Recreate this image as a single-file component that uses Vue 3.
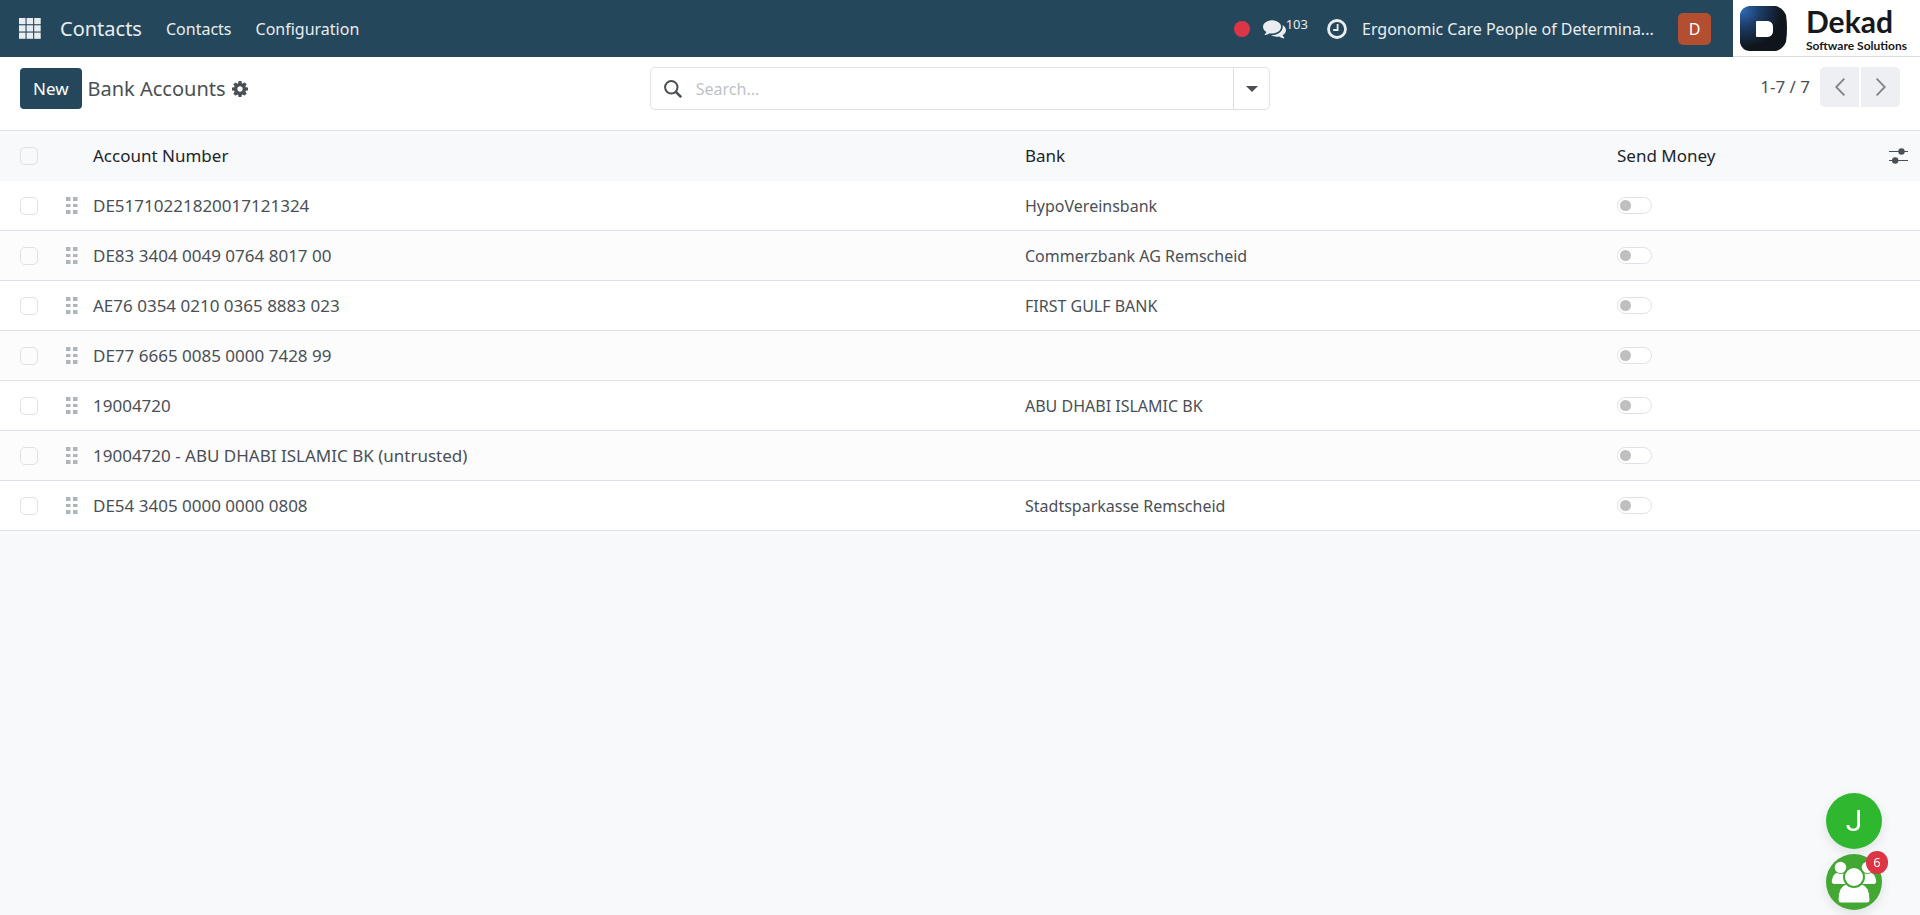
<template>
  <div class="web-client">
    <header class="navbar">
      <nav class="nav-menu" aria-label="Main">
        <button class="nav-apps" type="button" aria-label="Home menu">
          <svg viewBox="0 0 22 21" width="22" height="21" fill="currentColor">
            <template v-for="row in 3" :key="row">
              <rect
                v-for="col in 3"
                :key="col"
                :x="(col - 1) * 7.6"
                :y="(row - 1) * 7.3"
                width="6.5"
                height="6.2"
              />
            </template>
          </svg>
        </button>
        <a href="#" class="nav-brand">Contacts</a>
        <a v-for="item in menuItems" :key="item" href="#" class="nav-link">{{ item }}</a>
      </nav>

      <div class="nav-systray">
        <span class="status-dot"></span>
        <button class="systray-messages" type="button" aria-label="Messages">
          <svg viewBox="0 0 1792 1792" width="23" height="23" fill="currentColor">
            <path d="M1408 768q0 139-94 257t-256.5 186.5-353.5 68.5q-86 0-176-16-124 88-278 128-36 9-86 16h-3q-11 0-20.5-8t-11.5-21q-1-3-1-6.5t.5-6.5 2-6l2.5-5 3.5-5.5 4-5 4.5-5 4-4.5q5-6 23-25t26-29.5 22.5-29 25-38.5 20.5-44q-124-72-195-177t-71-224q0-139 94-257t256.5-186.5 353.5-68.5 353.5 68.5 256.5 186.5 94 257zm384 256q0 120-71 224.5t-195 176.5q10 24 20.5 44t25 38.5 22.5 29 26 29.5 23 25q1 1 4 4.5t4.5 5 4 5 3.5 5.5l2.5 5 2 6 .5 6.5-1 6.5q-3 14-13 22t-22 7q-50-7-86-16-154-40-278-128-90 16-176 16-271 0-472-132 58 4 88 4 161 0 309-45t264-129q125-92 192-212t67-254q0-77-23-152 129 71 204 178t75 230z" />
          </svg>
          <span class="message-count">103</span>
        </button>
        <button class="systray-activities" type="button" aria-label="Activities">
          <svg viewBox="0 0 20 20" width="20" height="20" fill="none" stroke="currentColor">
            <circle cx="10" cy="10" r="8.5" stroke-width="2.8" />
            <path d="M10.6 5v6H6.2" stroke-width="1.8" />
          </svg>
        </button>
        <button class="systray-company" type="button">Ergonomic Care People of Determina...</button>
        <button class="systray-avatar" type="button" aria-label="User">D</button>
      </div>

      <a href="#" class="vendor-logo">
        <svg viewBox="0 0 48 45" width="48" height="45">
          <defs>
            <radialGradient id="vendorShade" cx="0.05" cy="0.08" r="0.85">
              <stop offset="0" stop-color="#2f6bb5" />
              <stop offset="0.45" stop-color="#1c3c66" />
              <stop offset="1" stop-color="#10151c" />
            </radialGradient>
          </defs>
          <path d="M9 0h27q7 2 10 9 2 13 0 27-3 7-10 9H9q-7-1-9-8V8q2-7 9-8z" fill="url(#vendorShade)" />
          <path d="M17 15h11q5 1 5 6v4q0 5-5 6H17q-1 0-1-1V16q0-1 1-1z" fill="#fff" />
        </svg>
        <span class="vendor-text">
          <span class="vendor-name">Dekad</span>
          <span class="vendor-tagline">Software Solutions</span>
        </span>
      </a>
    </header>

    <section class="control-panel">
      <div class="panel-left">
        <button class="btn-new" type="button">New</button>
        <h1 class="panel-title">Bank Accounts</h1>
        <button class="btn-gear" type="button" aria-label="Actions">
          <svg viewBox="0 -128 1536 1536" width="16" height="16" fill="currentColor" fill-rule="evenodd">
            <path d="M1024 640q0-106-75-181t-181-75-181 75-75 181 75 181 181 75 181-75 75-181zm512-109v222q0 12-8 23t-20 13l-185 28q-19 54-39 91 35 50 107 138 10 12 10 25t-9 23q-27 37-99 108t-94 71q-12 0-26-9l-138-108q-44 23-91 38-16 136-29 186-7 28-36 28h-222q-14 0-24.5-8.5t-11.5-21.5l-28-184q-49-16-90-37l-141 107q-10 9-25 9-14 0-25-11-126-114-165-168-7-10-7-23 0-12 8-23 15-21 51-66.5t54-70.5q-27-50-41-99l-183-27q-13-2-21-12.5t-8-23.5v-222q0-12 8-23t19-13l186-28q14-46 39-92-40-57-107-138-10-12-10-24 0-10 9-23 26-36 98.5-107.5t94.5-71.5q13 0 26 10l138 107q44-23 91-38 16-136 29-186 7-28 36-28h222q14 0 24.5 8.5t11.5 21.5l28 184q49 16 90 37l142-107q9-9 24-9 13 0 25 10 129 119 165 170 7 8 7 22 0 12-8 23-15 21-51 66.5t-54 70.5q26 50 41 98l183 28q13 2 21 12.5t8 23.5z" />
          </svg>
        </button>
      </div>

      <div class="search-box">
        <svg class="search-icon" viewBox="0 0 18 18" width="18" height="18" fill="none" stroke="currentColor">
          <circle cx="7.3" cy="7.3" r="6.2" stroke-width="2" />
          <path d="M11.6 11.6l5.6 5.6" stroke-width="2.6" />
        </svg>
        <input v-model="query" type="search" placeholder="Search..." aria-label="Search" />
        <button class="search-toggle" type="button" aria-label="Toggle search panel">
          <svg viewBox="0 0 12 6" width="12" height="6" fill="currentColor">
            <path d="M0 0h12L6 6z" />
          </svg>
        </button>
      </div>

      <div class="pager">
        <span class="pager-value">1-7 / 7</span>
        <button class="pager-btn previous" type="button" aria-label="Previous">
          <svg viewBox="0 0 10 18" width="10" height="18" fill="none" stroke="currentColor" stroke-width="1.8">
            <path d="M9.4 0.6L1.2 9l8.2 8.4" />
          </svg>
        </button>
        <button class="pager-btn next" type="button" aria-label="Next">
          <svg viewBox="0 0 10 18" width="10" height="18" fill="none" stroke="currentColor" stroke-width="1.8">
            <path d="M0.6 0.6L8.8 9l-8.2 8.4" />
          </svg>
        </button>
      </div>
    </section>

    <table class="list-table">
      <colgroup>
        <col class="col-select" />
        <col class="col-handle" />
        <col />
        <col class="col-bank" />
        <col class="col-send" />
        <col class="col-options" />
      </colgroup>
      <thead>
        <tr>
          <th class="cell-select">
            <input v-model="allSelected" type="checkbox" class="row-check" aria-label="Select all" />
          </th>
          <th></th>
          <th>Account Number</th>
          <th>Bank</th>
          <th>Send Money</th>
          <th>
            <button class="btn-options" type="button" aria-label="Optional columns">
              <svg viewBox="0 0 19 16" width="19" height="16" fill="currentColor">
                <path d="M0 3h19v1H0zM0 12h19v1H0z" />
                <circle cx="12.5" cy="3.5" r="3.2" />
                <circle cx="6.2" cy="12.5" r="3.2" />
              </svg>
            </button>
          </th>
        </tr>
      </thead>
      <tbody>
        <tr v-for="account in accounts" :key="account.id">
          <td class="cell-select">
            <input
              v-model="account.selected"
              type="checkbox"
              class="row-check"
              :aria-label="`Select ${account.number}`"
            />
          </td>
          <td class="cell-handle">
            <svg viewBox="0 0 12 17" width="12" height="17" fill="currentColor">
              <path d="M0 0h4.500v4H0zM7 0h4.500v4H7zM0 7h4.500v3H0zM7 7h4.500v3H7zM0 13h4.500v4H0zM7 13h4.500v4H7z" />
            </svg>
          </td>
          <td class="cell-number">{{ account.number }}</td>
          <td>{{ account.bank }}</td>
          <td>
            <input
              v-model="account.sendMoney"
              type="checkbox"
              role="switch"
              class="switch"
              :aria-label="`Send money to ${account.number}`"
            />
          </td>
          <td></td>
        </tr>
      </tbody>
    </table>

    <div class="chat-hub">
      <button class="chat-bubble" type="button">J</button>
      <button class="chat-bubble group" type="button" aria-label="Group conversation">
        <svg viewBox="0 0 56 56" width="56" height="56" fill="#fff">
          <circle cx="14.5" cy="13.5" r="5.8" />
          <circle cx="41.5" cy="13.5" r="5.8" />
          <path d="M6 26q1-6 5-7 4 2 8 0 2 8 4 11H8q-3-1-2-4zM50 26q-1-6-5-7-4 2-8 0-2 8-4 11h15q3-1 2-4z" />
          <path
            d="M20 30q8 4 16 0 8 3 8 16 0 3-3 3H15q-3 0-3-3 0-13 8-16z"
            stroke="#43a832"
            stroke-width="1"
          />
          <circle cx="28" cy="23" r="10" stroke="#43a832" stroke-width="2" />
        </svg>
        <span class="chat-badge">6</span>
      </button>
    </div>
  </div>
</template>

<script setup>
import { computed, ref } from 'vue'

const menuItems = ['Contacts', 'Configuration']

const query = ref('')

const accounts = ref([
  { id: 1, number: 'DE51710221820017121324', bank: 'HypoVereinsbank', sendMoney: false, selected: false },
  { id: 2, number: 'DE83 3404 0049 0764 8017 00', bank: 'Commerzbank AG Remscheid', sendMoney: false, selected: false },
  { id: 3, number: 'AE76 0354 0210 0365 8883 023', bank: 'FIRST GULF BANK', sendMoney: false, selected: false },
  { id: 4, number: 'DE77 6665 0085 0000 7428 99', bank: '', sendMoney: false, selected: false },
  { id: 5, number: '19004720', bank: 'ABU DHABI ISLAMIC BK', sendMoney: false, selected: false },
  { id: 6, number: '19004720 - ABU DHABI ISLAMIC BK (untrusted)', bank: '', sendMoney: false, selected: false },
  { id: 7, number: 'DE54 3405 0000 0000 0808', bank: 'Stadtsparkasse Remscheid', sendMoney: false, selected: false }
])

const allSelected = computed({
  get: () => accounts.value.every((account) => account.selected),
  set: (value) => accounts.value.forEach((account) => (account.selected = value))
})
</script>

<style>
body {
  margin: 0;
  background: #f8f9fb;
}
</style>

<style scoped>
.web-client {
  color: #4a4f55;
  font-family: 'Segoe UI', 'Noto Sans', 'Open Sans', sans-serif;
  font-size: 16px;
  line-height: 24px;
}

button,
input {
  margin: 0;
  padding: 0;
  border: 0;
  background: none;
  color: inherit;
  font: inherit;
}

button {
  cursor: pointer;
}

svg {
  display: block;
}

/* Navbar */
.navbar {
  display: flex;
  align-items: stretch;
  height: 57px;
  background: #25475b;
  color: #e9edef;
}

.navbar a {
  color: inherit;
  text-decoration: none;
}

.nav-menu {
  display: flex;
  flex: 1;
  align-items: center;
  padding-left: 19px;
}

.nav-brand {
  margin: 0 24px 0 19px;
  font-size: 20px;
}

.nav-link {
  margin-right: 24px;
}

.nav-systray {
  display: flex;
  align-items: center;
}

.status-dot {
  width: 16px;
  height: 16px;
  margin-right: 13px;
  border-radius: 50%;
  background: #dc3545;
}

.systray-messages {
  display: flex;
  align-items: center;
  margin-right: 19px;
}

.message-count {
  align-self: flex-start;
  font-size: 13px;
  line-height: 14px;
}

.systray-activities {
  margin-right: 15px;
}

.systray-company {
  min-width: 300px;
  margin-right: 16px;
  text-align: left;
}

.systray-avatar {
  width: 33px;
  height: 32px;
  margin-right: 22px;
  border-radius: 5px;
  background: #b44e31;
  color: #fff;
}

.vendor-logo {
  display: flex;
  align-items: center;
  gap: 18px;
  padding: 0 10px 0 7px;
  border-bottom: 1px solid #d9dbdd;
  background: #fff;
}

.navbar .vendor-logo {
  color: #16181a;
}

.vendor-text {
  display: flex;
  flex-direction: column;
  min-width: 104px;
  font-family: 'Century Gothic', Lato, sans-serif;
  font-weight: 700;
}

.vendor-name {
  font-size: 30px;
  line-height: 36px;
}

.vendor-tagline {
  font-size: 12px;
  line-height: 14px;
}

/* Control panel */
.control-panel {
  display: grid;
  grid-template-columns: 1fr 33% 1fr;
  align-items: start;
  padding: 10px 20px 20px;
  border-bottom: 1px solid #dee2e6;
  background: #fff;
}

.panel-left {
  display: flex;
  align-items: center;
}

.btn-new {
  height: 41px;
  margin: 1px 6px 0 0;
  padding: 0 13px;
  border-radius: 4px;
  background: #25475b;
  color: #fff;
  font-size: 17px;
}

.panel-title {
  margin: 0;
  padding-top: 2px;
  font-size: 20px;
  font-weight: 400;
}

.btn-gear {
  margin-left: 6px;
  padding-top: 2px;
}

.search-box {
  display: flex;
  align-items: center;
  box-sizing: border-box;
  height: 43px;
  border: 1px solid #dee2e6;
  border-radius: 5px;
}

.search-icon {
  margin: 0 14px 0 13px;
}

.search-box input {
  flex: 1;
  min-width: 0;
  outline: none;
}

.search-box input::placeholder {
  color: #bdc3c9;
  opacity: 1;
}

.search-toggle {
  display: flex;
  align-items: center;
  justify-content: center;
  align-self: stretch;
  width: 36px;
  border-left: 1px solid #dee2e6;
}

.pager {
  display: flex;
  align-items: center;
  justify-content: flex-end;
  gap: 2px;
}

.pager-value {
  margin-right: 8px;
  font-size: 17px;
}

.pager-btn {
  display: flex;
  align-items: center;
  justify-content: center;
  width: 39px;
  height: 40px;
  background: #eeeff3;
  color: #808285;
}

.previous {
  border-radius: 5px 0 0 5px;
}

.next {
  border-radius: 0 5px 5px 0;
}

/* List */
.list-table {
  width: 100%;
  border-collapse: separate;
  border-spacing: 0;
  table-layout: fixed;
}

.col-select {
  width: 61px;
}

.col-handle {
  width: 27px;
}

.col-bank {
  width: 592px;
}

.col-send {
  width: 267px;
}

.col-options {
  width: 41px;
}

.list-table th,
.list-table td {
  box-sizing: border-box;
  height: 50px;
  padding: 0 5px;
  text-align: left;
  vertical-align: middle;
  white-space: nowrap;
}

.list-table th {
  color: #212529;
  font-size: 17px;
  font-weight: 400;
}

.list-table td {
  border-bottom: 1px solid #dee2e6;
  background: #fff;
}

.list-table tr:nth-child(even) td {
  background: #fcfcfc;
}

.list-table .cell-select {
  padding-left: 20px;
}

.cell-handle {
  color: #adb5bd;
}

.cell-number {
  font-size: 17px;
}

.row-check {
  display: block;
  box-sizing: border-box;
  width: 18px;
  height: 18px;
  border: 1px solid #dee2e6;
  border-radius: 5px;
  appearance: none;
}

.row-check:checked {
  background: #25475b;
}

.switch {
  display: flex;
  align-items: center;
  box-sizing: border-box;
  width: 35px;
  height: 17px;
  padding: 0 2px;
  border: 1px solid #dee2e6;
  border-radius: 9px;
  background: #fff;
  appearance: none;
}

.switch::before {
  content: '';
  width: 11px;
  height: 11px;
  border-radius: 50%;
  background: #bfbfbf;
}

.switch:checked {
  justify-content: flex-end;
  background: #25475b;
}

.btn-options {
  display: block;
  margin-left: 5px;
  color: #495057;
}

/* Floating conversations */
.chat-hub {
  position: fixed;
  right: 38px;
  bottom: 5px;
  display: flex;
  flex-direction: column;
  gap: 5px;
}

.chat-bubble {
  position: relative;
  width: 56px;
  height: 56px;
  border-radius: 50%;
  background: #2fb82f;
  box-shadow: 0 4px 12px rgba(0, 0, 0, 0.1);
  color: #fff;
  font-family: Roboto, sans-serif;
  font-size: 30px;
}

.group {
  background: #43a832;
}

.chat-badge {
  position: absolute;
  top: -3px;
  right: -6px;
  width: 22px;
  height: 23px;
  border-radius: 12px;
  background: #dc3545;
  font-family: 'Segoe UI', 'Noto Sans', sans-serif;
  font-size: 13px;
  line-height: 23px;
  text-align: center;
}
</style>
